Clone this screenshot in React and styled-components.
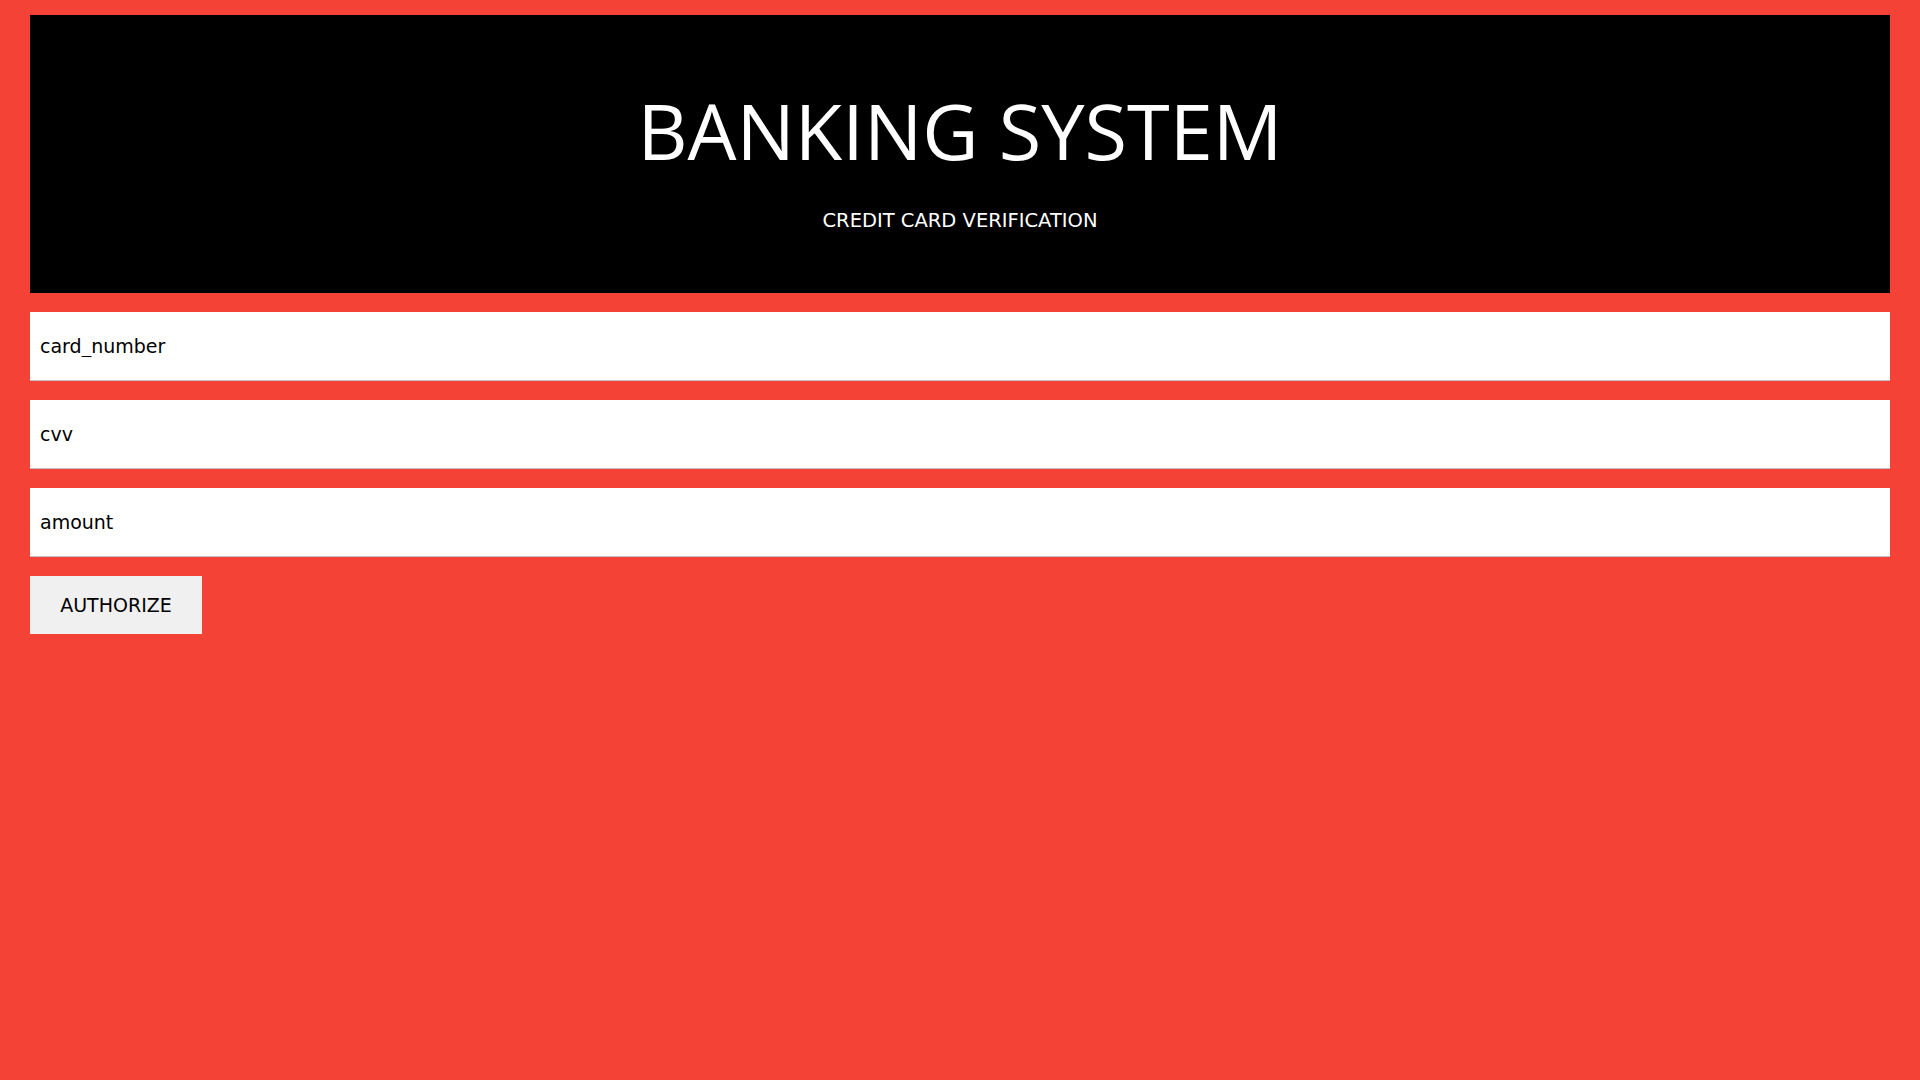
import React from "react";
import styled, { createGlobalStyle } from "styled-components";

const GlobalStyle = createGlobalStyle`
  html, body {
    margin: 0;
    padding: 0;
    background: #f44336;
  }
  body {
    font-family: "DejaVu Sans", "Open Sans", sans-serif;
  }
`;

const Page = styled.div`
  min-height: 100vh;
  box-sizing: border-box;
  padding: 15px 30px;
  display: flex;
  flex-direction: column;
  align-items: flex-start;
  gap: 19px;
`;

const Header = styled.header`
  align-self: stretch;
  height: 278px;
  box-sizing: border-box;
  background: #000;
  color: #fff;
  display: flex;
  flex-direction: column;
  align-items: center;
  padding-top: 77px;
`;

const Title = styled.h1`
  margin: 0;
  font-family: "Open Sans", sans-serif;
  font-weight: 400;
  font-size: 77.5px;
  line-height: 1;
`;

const Subtitle = styled.p`
  margin: 41.5px 0 0;
  font-family: "DejaVu Sans", sans-serif;
  font-size: 19.5px;
  line-height: 1;
`;

const Field = styled.input`
  align-self: stretch;
  height: 69px;
  box-sizing: border-box;
  border: none;
  border-bottom: 1px solid #c3c3c3;
  background: #fff;
  padding: 0 10px;
  font-family: "DejaVu Sans", sans-serif;
  font-size: 19px;
  color: #000;
  outline: none;
  &::placeholder {
    color: #000;
    opacity: 1;
  }
`;

const Button = styled.button`
  width: 172px;
  height: 58px;
  border: none;
  background: #f0f0f0;
  color: #000;
  font-family: "DejaVu Sans", sans-serif;
  font-size: 19px;
  cursor: pointer;
`;

export default function App() {
  return (
    <>
      <GlobalStyle />
      <Page>
        <Header>
          <Title>BANKING SYSTEM</Title>
          <Subtitle>CREDIT CARD VERIFICATION</Subtitle>
        </Header>
        <Field placeholder="card_number" />
        <Field placeholder="cvv" />
        <Field placeholder="amount" />
        <Button>AUTHORIZE</Button>
      </Page>
    </>
  );
}
